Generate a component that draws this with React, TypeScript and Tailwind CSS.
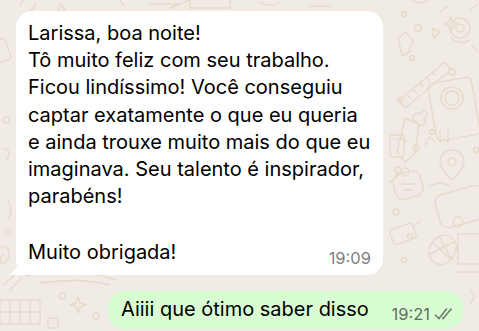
import React from "react";

const lines = [
  "Larissa, boa noite!",
  "Tô muito feliz com seu trabalho.",
  "Ficou lindíssimo! Você conseguiu",
  "captar exatamente o que eu queria",
  "e ainda trouxe muito mais do que eu",
  "imaginava. Seu talento é inspirador,",
  "parabéns!",
];

function Doodles() {
  return (
    <svg
      className="absolute inset-0"
      width="479"
      height="331"
      viewBox="0 0 479 331"
      fill="none"
      stroke="#e6dacb"
      strokeWidth="1.4"
      strokeLinecap="round"
      strokeLinejoin="round"
    >
      {/* left column */}
      <path d="M20 6 l3 -6 M30 12 l6 -8" />
      <rect x="-6" y="40" width="14" height="22" rx="3" transform="rotate(-20 0 50)" />
      <circle cx="6" cy="120" r="3" />
      <path d="M2 150 c6 -4 10 4 4 10 M8 200 q6 10 0 20" />
      <circle cx="8" cy="232" r="2.5" />
      <path d="M0 248 c8 -6 12 6 6 14 c-6 6 -8 -4 -2 -8" />
      <path d="M4 285 l12 -12 M10 290 l12 -12 M0 300 h40 v24 h-40 z M10 300 v24 M20 300 v24 M30 300 v24 M0 312 h40" />
      <circle cx="62" cy="296" r="3" />
      <path d="M76 303 l2 -6 l2 6 l6 2 l-6 2 l-2 6 l-2 -6 l-6 -2 z" />
      <rect x="48" y="318" width="10" height="10" rx="2" />
      <circle cx="96" cy="316" r="3" />
      <path d="M26 276 q50 -10 90 4 M40 283 q40 -6 70 2" />
      {/* top strip */}
      <path d="M60 4 l6 6 l-8 2 z M120 0 l4 6 M150 4 h30 M170 8 l20 -8" />
      <path d="M190 0 v8 h40 v-8 M260 2 q10 6 20 0 M310 6 h20" />
      {/* right column */}
      <path d="M410 -2 q10 10 20 0 M440 12 l8 -6" />
      <circle cx="404" cy="14" r="2.5" />
      <circle cx="418" cy="28" r="3.5" />
      <path d="M449 22 l2 -5 l2 5 l5 2 l-5 2 l-2 5 l-2 -5 l-5 -2 z" />
      <path d="M398 38 l8 -6 l8 10 q-6 4 -4 10 l-8 4 z" />
      <circle cx="412" cy="58" r="2.5" />
      <path d="M432 28 l8 4 l-6 6 z" />
      <circle cx="460" cy="28" r="10" />
      <circle cx="460" cy="28" r="4" />
      <path d="M452 38 q8 8 18 2 M470 10 l8 -6 M472 46 l6 6" />
      <rect x="395" y="80" width="60" height="10" rx="2" transform="rotate(-40 425 85)" />
      <path d="M408 96 l3 3 M414 90 l3 3 M420 84 l3 3 M426 78 l3 3 M432 72 l3 3" />
      <circle cx="452" cy="72" r="3" />
      <path d="M412 118 q4 -8 8 -4 l4 -4 l4 4 l-4 4 q4 6 -4 8 z" />
      <circle cx="400" cy="100" r="2.5" />
      <path d="M396 140 q6 -4 10 2" />
      <rect x="432" y="80" width="44" height="58" rx="4" transform="rotate(-10 454 109)" />
      <circle cx="452" cy="98" r="11" />
      <circle cx="452" cy="98" r="7" />
      <path d="M440 130 v12 l4 -3 l4 3 v-12" />
      <path d="M405 118 l14 6 l-4 30 l-10 8 l-8 -10 z" />
      <path d="M425 145 l4 -8 l6 4" />
      <rect x="390" y="135" width="14" height="22" rx="2" />
      <circle cx="432" cy="132" r="2.5" />
      <circle cx="416" cy="148" r="3" />
      <path d="M452 150 c-8 0 -12 6 -12 12 c0 8 12 18 12 18 c0 0 12 -10 12 -18 c0 -6 -4 -12 -12 -12 z" />
      <circle cx="452" cy="162" r="4" />
      <circle cx="398" cy="170" r="3" />
      <circle cx="476" cy="150" r="2.5" />
      <path d="M390 182 l8 -6 M430 186 q10 -6 20 0" />
      <rect x="394" y="172" width="28" height="26" rx="8" transform="rotate(-15 408 185)" />
      <circle cx="405" cy="172" r="4" />
      <path d="M402 184 h12 M404 190 h8" />
      <rect x="437" y="190" width="50" height="34" rx="8" transform="rotate(-15 460 207)" />
      <circle cx="458" cy="222" r="5" />
      <circle cx="396" cy="212" r="3" />
      <circle cx="410" cy="236" r="2.5" />
      <rect x="391" y="226" width="24" height="16" rx="3" transform="rotate(-20 403 234)" />
      <path d="M414 226 l6 -4" />
      <path d="M430 246 c6 -12 18 -14 24 -6 c6 8 0 20 -10 24 c-10 2 -18 -6 -14 -18 z M434 244 l18 16 M440 238 l12 22 M430 254 l24 -12" />
      <path d="M458 234 h24 v30 h-24 z M456 272 h30" />
      <circle cx="404" cy="260" r="2.5" />
      <path d="M392 300 q6 -8 12 0 M470 290 q8 6 0 14" />
    </svg>
  );
}

function DoubleCheck() {
  return (
    <svg width="20" height="14" viewBox="0 0 20 14" fill="none" stroke="#6f7d70" strokeWidth="1.6" strokeLinecap="round" strokeLinejoin="round">
      <path d="M1.5 8.2 L5 11.6 L12.5 2" />
      <path d="M8.6 11.2 L9.2 11.6 L17 2" />
    </svg>
  );
}

export default function App() {
  return (
    <div
      className="relative h-[331px] w-[479px] overflow-hidden bg-[#f0ebe4]"
      style={{ fontFamily: "Inter, 'Noto Sans', sans-serif" }}
    >
      <Doodles />

      <div className="relative flex flex-col pt-[11px]">
        <div className="relative ml-[16px] w-[367px]">
          <svg className="absolute -left-[8px] bottom-0" width="20" height="18" viewBox="0 0 20 18">
            <path d="M20 0 V18 H0 C6 16 10 10 10 2 Z" fill="#ffffff" />
          </svg>
          <div className="relative rounded-[16px] bg-white px-[12px] pt-[9px] pb-[7px] text-[20px] leading-[27.2px] text-black">
            {lines.map((l) => (
              <div key={l} className="whitespace-nowrap">
                {l}
              </div>
            ))}
            <div className="h-[27.2px]" />
            <div className="flex items-center justify-between">
              <span>Muito obrigada!</span>
              <span className="mt-[10px] text-[16.5px] leading-[20px] text-[#7f7f7f]">19:09</span>
            </div>
          </div>
        </div>

        <div className="mt-[16px] mr-[16px] flex h-[38px] w-[355px] items-center self-end rounded-[16px] bg-[#d9fdd3] pl-[13px] pr-[9px]">
          <span className="text-[20px] leading-[27px] text-black">Aiiii que ótimo saber disso</span>
          <span className="ml-auto mt-[9px] flex items-center gap-[4px]">
            <span className="text-[16.5px] leading-[20px] text-[#5e6e60]">19:21</span>
            <DoubleCheck />
          </span>
        </div>
      </div>
    </div>
  );
}
